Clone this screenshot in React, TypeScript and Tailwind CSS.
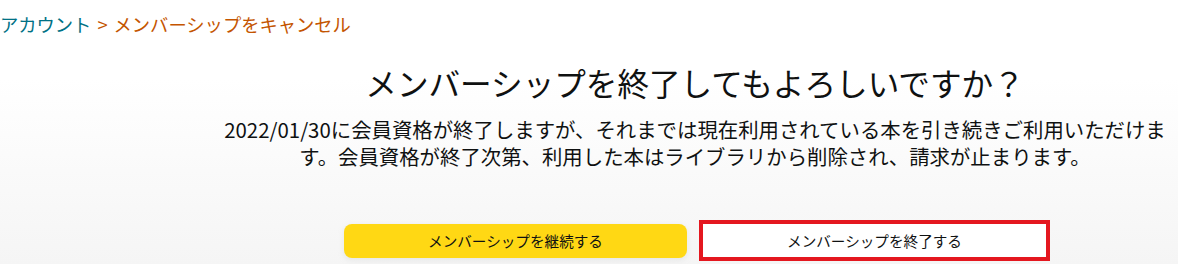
export default function App() {
  return (
    <div
      className="h-[264px] w-[1178px] overflow-hidden bg-gradient-to-b from-white from-30% to-[#f5f5f5] text-[#0f1111]"
      style={{ fontFamily: '"Noto Sans CJK JP", "Noto Sans", sans-serif' }}
    >
      <nav className="flex items-center gap-[6px] pt-[11px] text-[18.3px] leading-[26px]">
        <span className="text-[#007185]">アカウント</span>
        <span className="text-[#c45500]">&gt;</span>
        <span className="text-[#c45500]">メンバーシップをキャンセル</span>
      </nav>

      <div className="ml-[214px] flex w-[962px] flex-col items-center">
        <h1 className="mt-[24px] text-[31.6px] leading-[42px] font-normal">
          メンバーシップを終了してもよろしいですか？
        </h1>
        <p className="mt-[13px] text-center text-[20.4px] leading-[27px]">
          2022/01/30に会員資格が終了しますが、それまでは現在利用されている本を引き続きご利用いただけます。会員資格が終了次第、利用した本はライブラリから削除され、請求が止まります。
        </p>

        <div className="mt-[54px] flex gap-[16px]">
          <button className="h-[34px] w-[343px] rounded-[8px] bg-[#ffd814] text-[14.6px] text-[#0f1111] shadow-[0_2px_5px_rgba(213,217,217,0.5)]">
            メンバーシップを継続する
          </button>
          <button className="-mx-[4px] -mt-[4px] h-[41px] w-[351px] border-[4px] border-[#e4171f] bg-white text-[14.6px] text-[#0f1111]">
            メンバーシップを終了する
          </button>
        </div>
      </div>
    </div>
  );
}
